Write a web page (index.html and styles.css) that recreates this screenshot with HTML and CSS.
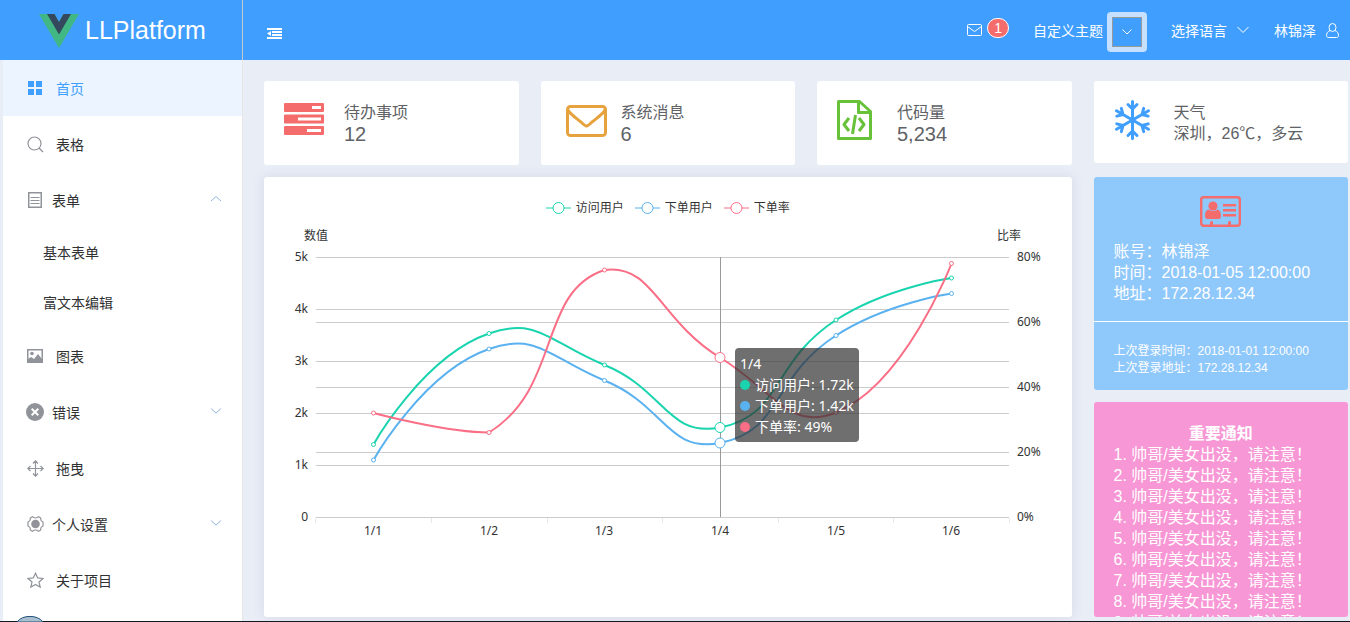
FILE: index.html
```html
<!DOCTYPE html>
<html lang="zh-CN">
<head>
<meta charset="utf-8">
<title>LLPlatform</title>
<link rel="stylesheet" href="styles.css">
</head>
<body>
<div class="app">
  <header class="header">
    <a class="brand" href="#">
      <svg class="brand-mark" width="40" height="34" viewBox="0 0 40 34" aria-hidden="true"><path d="M0 0h15.500l4.500 8 4.500-8H40L20 34z" fill="#41b883"/><path d="M8 0h7.500l4.500 8 4.500-8H32L20 20.500z" fill="#34495e"/></svg>
      <span>LLPlatform</span>
    </a>
    <button class="icon-button toggle" aria-label="收起菜单">
      <svg width="15" height="12" viewBox="0 0 15 12" fill="#fff"><path d="M0 0h15v2H0zM5 3h10v2H5zM5 6h10v2H5zM0 9h15v2H0zM4 3v5L0 5.500z"/></svg>
    </button>
    <nav class="tools">
      <a class="mail" href="#" aria-label="消息">
        <svg width="15" height="12" viewBox="0 0 15 12" fill="none" stroke="#fff"><rect x=".5" y=".5" width="14" height="11" rx="1"/><path d="M.5 2.500l7 5 7-5"/></svg>
        <span class="badge">1</span>
      </a>
      <div class="theme">
        <span>自定义主题</span>
        <button class="swatch" aria-label="选择颜色"><span class="swatch-color"><svg width="12" height="8" viewBox="0 0 12 8" fill="none" stroke="#fff"><path d="M1.500 1.500L6 6l4.500-4.500"/></svg></span></button>
      </div>
      <button class="text-button language">选择语言 <svg width="12" height="8" viewBox="0 0 12 8" fill="none" stroke="#fff"><path d="M.5 1l5.500 5.500L11.500 1"/></svg></button>
      <button class="text-button user">林锦泽 <svg width="13" height="15" viewBox="0 0 13 15" fill="none" stroke="#fff"><ellipse cx="6.500" cy="4.500" rx="3.500" ry="4"/><path d="M4 7.500C1.500 8.500.500 10.500.500 12.500c0 1.500 1 2 2 2h8c1 0 2-.500 2-2 0-2-1-4-3.500-5"/></svg></button>
    </nav>
  </header>

  <div class="body">
    <nav class="sidebar">
      <a class="item leaf active" href="#"><span class="glyph"><svg width="14" height="14" viewBox="0 0 14 14" fill="#409eff"><path d="M0 0h6v6H0zM8 0h6v6H8zM0 8h6v6H0zM8 8h6v6H8z"/></svg></span>首页</a>
      <a class="item leaf" href="#"><span class="glyph"><svg width="17" height="17" viewBox="0 0 17 17" fill="none" stroke="#909399" stroke-width="1.200"><circle cx="7.500" cy="7.500" r="6.500"/><path d="M12 12l4 4"/></svg></span>表格</a>
      <button class="item" aria-expanded="true"><span class="glyph"><svg width="14" height="16" viewBox="0 0 14 16" fill="none" stroke="#909399"><path d="M.750.750h12.500v14.500H.750z" stroke-width="1.500"/><path d="M2.500 5.500h9M2.500 8.500h9M2.500 11.500h9"/></svg></span>表单<svg class="arrow" width="12" height="8" viewBox="0 0 12 8"><path d="M1 6l5-4.500L11 6"/></svg></button>
      <a class="item sub" href="#">基本表单</a>
      <a class="item sub" href="#">富文本编辑</a>
      <a class="item leaf" href="#"><span class="glyph"><svg width="16" height="14" viewBox="0 0 16 14"><path d="M.750.750h14.500v12.500H.750z" fill="none" stroke="#909399" stroke-width="1.500"/><circle cx="5" cy="4.500" r="1.800" fill="#909399"/><path d="M1 13V10l3-2 3 2 4-5 4 5v3z" fill="#909399"/></svg></span>图表</a>
      <button class="item" aria-expanded="false"><span class="glyph"><svg width="18" height="18" viewBox="0 0 18 18"><circle cx="9" cy="9" r="9" fill="#909399"/><path d="M5.700 5.700l6.600 6.600M12.300 5.700l-6.600 6.600" stroke="#fff" stroke-width="2"/></svg></span>错误<svg class="arrow" width="12" height="8" viewBox="0 0 12 8"><path d="M1 1.500L6 6l5-4.500"/></svg></button>
      <a class="item leaf" href="#"><span class="glyph"><svg width="17" height="17" viewBox="0 0 17 17" fill="none" stroke="#909399" stroke-width="1.200"><path d="M8.500 1v15M1 8.500h15M6 3.500l2.500-2.700L11 3.500M6 13.500l2.500 2.700 2.500-2.700M3.500 6L.800 8.500 3.500 11M13.500 6l2.700 2.500-2.700 2.500"/></svg></span>拖曳</a>
      <button class="item" aria-expanded="false"><span class="glyph"><svg width="17" height="16" viewBox="0 0 17 16"><circle cx="8.500" cy="8" r="4.300" fill="#909399"/><path d="M5.500.700c1 1 2 1.300 3 1.300s2-.300 3-1.300l2.200 1.300c-.300 2 .400 3.300 2.300 4v4c-1.900.700-2.600 2-2.300 4l-2.200 1.300c-1-1-2-1.300-3-1.300s-2 .300-3 1.300L3.300 14c.300-2-.400-3.300-2.300-4V6c1.900-.700 2.600-2 2.300-4z" fill="none" stroke="#909399" stroke-width="1.200"/></svg></span>个人设置<svg class="arrow" width="12" height="8" viewBox="0 0 12 8"><path d="M1 1.500L6 6l5-4.500"/></svg></button>
      <a class="item leaf" href="#"><span class="glyph"><svg width="17" height="16" viewBox="0 0 17 16" fill="none" stroke="#909399" stroke-width="1.200"><path d="M8.500 1.200l2.200 4.700 5.300.600-4 3.500 1.200 5.100-4.700-2.700-4.700 2.700L5 10 1 6.500l5.300-.600z"/></svg></span>关于项目</a>
    </nav>

    <main class="main">
      <div class="left">
        <div class="stats">
          <section class="card stat">
            <svg class="stat-icon" width="40" height="40" viewBox="0 0 40 40"><path d="M1 3h38a1 1 0 0 1 1 1v7a1 1 0 0 1-1 1H1a1 1 0 0 1-1-1V4a1 1 0 0 1 1-1zM1 14.500h38a1 1 0 0 1 1 1v7a1 1 0 0 1-1 1H1a1 1 0 0 1-1-1v-7a1 1 0 0 1 1-1zM1 26h38a1 1 0 0 1 1 1v7a1 1 0 0 1-1 1H1a1 1 0 0 1-1-1v-7a1 1 0 0 1 1-1z" fill="#f56c6c"/><path d="M28 6h9v3h-9zM14 17.500h23v3H14zM23 29h14v3H23z" fill="#fff"/></svg>
            <div><h2 class="stat-title">待办事项</h2><p class="stat-value">12</p></div>
          </section>
          <section class="card stat">
            <svg class="stat-icon mail-icon" width="41" height="40" viewBox="0 0 41 40" fill="none" stroke="#e6a23c" stroke-width="3"><rect x="1.500" y="6.500" width="38" height="29" rx="3"/><path d="M2 10c2 4 8 8 13 12 3 3 4 4 5.500 4s2.500-1 5.500-4c5-4 11-8 13-12"/></svg>
            <div><h2 class="stat-title">系统消息</h2><p class="stat-value">6</p></div>
          </section>
          <section class="card stat">
            <svg class="stat-icon" width="40" height="40" viewBox="0 0 40 40" fill="none" stroke="#67c23a" stroke-width="3" stroke-linejoin="round"><path d="M1.500 1.500h21l11 10v27h-32zM21.500 1.500v11h12"/><path d="M12 18l-5 6.500 5 6.500M22 18l5 6.500-5 6.500M18.500 15l-3 19"/></svg>
            <div><h2 class="stat-title">代码量</h2><p class="stat-value">5,234</p></div>
          </section>
        </div>

        <section class="card chart">
          <ul class="legend">
            <li class="legend-item green"><svg width="25" height="14" viewBox="0 0 25 14"><path d="M0 7h25"/><circle cx="12.500" cy="7" r="5.500"/></svg>访问用户</li>
            <li class="legend-item blue"><svg width="25" height="14" viewBox="0 0 25 14"><path d="M0 7h25"/><circle cx="12.500" cy="7" r="5.500"/></svg>下单用户</li>
            <li class="legend-item pink"><svg width="25" height="14" viewBox="0 0 25 14"><path d="M0 7h25"/><circle cx="12.500" cy="7" r="5.500"/></svg>下单率</li>
          </ul>
          <svg class="plot" viewBox="0 0 807 400" preserveAspectRatio="xMinYMin meet" role="img" aria-label="访问用户、下单用户与下单率">
            <path class="grid-line" d="M52 40.500h693M52 92.500h693M52 105.500h693M52 144.500h693M52 170.500h693M52 196.500h693M52 235.500h693M52 248.500h693M52 300.500h693"/>
            <path class="tick" d="M51.500 301v5M167.500 301v5M283.500 301v5M398.500 301v5M514.500 301v5M629.500 301v5M745.500 301v5"/>
            <g class="axis" text-anchor="end">
              <text x="44" y="44">5k</text><text x="44" y="96">4k</text><text x="44" y="148">3k</text><text x="44" y="200">2k</text><text x="44" y="252">1k</text><text x="44" y="304">0</text>
            </g>
            <g class="axis">
              <text x="753" y="44">80%</text><text x="753" y="109">60%</text><text x="753" y="174">40%</text><text x="753" y="239">20%</text><text x="753" y="304">0%</text>
            </g>
            <g class="axis" text-anchor="middle">
              <text x="52" y="23">数值</text><text x="745" y="23">比率</text>
              <text x="109" y="318">1/1</text><text x="225" y="318">1/2</text><text x="340" y="318">1/3</text><text x="456" y="318">1/4</text><text x="572" y="318">1/5</text><text x="687" y="318">1/6</text>
            </g>
            <path class="pointer" d="M456.500 40v260"/>
            <g id="series"></g>
          </svg>
          <div class="tooltip">
            <div>1/4</div>
            <div><i class="dot green-dot"></i>访问用户: 1.72k</div>
            <div><i class="dot blue-dot"></i>下单用户: 1.42k</div>
            <div><i class="dot pink-dot"></i>下单率: 49%</div>
          </div>
        </section>
      </div>

      <aside class="right">
        <section class="card stat weather">
          <svg class="stat-icon" width="40" height="40" viewBox="0 0 40 40" fill="none" stroke="#409eff" stroke-width="3" stroke-linecap="round" stroke-linejoin="round"><g id="arm"><path d="M18.500 20V1.500M14 4.500l4.500 4.500L23 4.500"/></g><use href="#arm" transform="rotate(60 18.500 20)"/><use href="#arm" transform="rotate(120 18.500 20)"/><use href="#arm" transform="rotate(180 18.500 20)"/><use href="#arm" transform="rotate(240 18.500 20)"/><use href="#arm" transform="rotate(300 18.500 20)"/></svg>
          <div><h2 class="stat-title">天气</h2><p class="stat-text">深圳，26℃，多云</p></div>
        </section>
        <section class="account">
          <div class="account-main">
            <svg class="account-icon" width="41" height="31" viewBox="0 0 41 31"><rect x="1.200" y="1.200" width="38.600" height="28.600" rx="2.500" fill="none" stroke="#f56c6c" stroke-width="2.400"/><g fill="#f56c6c"><circle cx="13" cy="10" r="4.600"/><path d="M8.500 13.500c3 2 6 2 9 0 2.500.500 3.500 3 3.500 6.500 0 2-1 3-2.500 3h-11C6 23 5 22 5 20c0-3.500 1-6 3.500-6.500zM23 8h13v2.400H23zM23 13h13v2.400H23zM23 18h13v2.400H23zM10 29v-2.500c0-2 3-2 3 0V29zM28 29v-2.500c0-2 3-2 3 0V29z"/></g></svg>
            <p>账号：林锦泽</p>
            <p>时间：2018-01-05 12:00:00</p>
            <p>地址：172.28.12.34</p>
          </div>
          <div class="account-last">
            <p>上次登录时间：2018-01-01 12:00:00</p>
            <p>上次登录地址：172.28.12.34</p>
          </div>
        </section>
        <section class="notice">
          <h2 class="notice-title">重要通知</h2>
          <ul class="notice-list">
            <li>1. 帅哥/美女出没，请注意！</li>
            <li>2. 帅哥/美女出没，请注意！</li>
            <li>3. 帅哥/美女出没，请注意！</li>
            <li>4. 帅哥/美女出没，请注意！</li>
            <li>5. 帅哥/美女出没，请注意！</li>
            <li>6. 帅哥/美女出没，请注意！</li>
            <li>7. 帅哥/美女出没，请注意！</li>
            <li>8. 帅哥/美女出没，请注意！</li>
            <li>9. 帅哥/美女出没，请注意！</li>
          </ul>
        </section>
      </aside>
    </main>
  </div>
  <div class="taskbar"><svg class="orb" width="26" height="6" viewBox="0 0 26 6"><path d="M0 6C5-1.500 21-1.500 26 6z" fill="#a9bfd0" stroke="#1f4e79"/></svg></div>
</div>
<script src="chart.js"></script>
</body>
</html>
```

FILE: styles.css
```css
* {
  box-sizing: border-box;
}

body {
  margin: 0;
  background: #e9edf6;
  color: #303133;
  font-family: "Liberation Sans", "Noto Sans CJK SC", sans-serif;
  font-size: 14px;
}

h2,
p,
ul {
  margin: 0;
  padding: 0;
  font-weight: 400;
  list-style: none;
}

a {
  color: inherit;
  text-decoration: none;
}

button {
  border: 0;
  padding: 0;
  background: none;
  color: inherit;
  font: inherit;
  cursor: pointer;
}

svg {
  display: block;
  flex: none;
}

.app {
  display: grid;
  grid-template-rows: 60px minmax(0, 1fr) 1px;
  height: 100vh;
  overflow: hidden;
}

/* Header */
.header {
  display: flex;
  align-items: stretch;
  background: #409eff;
  color: #fff;
}

.brand {
  display: flex;
  align-items: center;
  gap: 6px;
  width: 243px;
  padding: 1px 0 0 39px;
  border-right: 1px solid #c5c9d2;
  font-size: 25px;
}

.toggle {
  padding: 7px 24px 0;
}

.tools {
  display: flex;
  align-items: center;
  gap: 24px;
  margin-left: auto;
  padding-right: 11px;
}

.mail {
  display: flex;
  align-items: center;
  gap: 5px;
}

.badge {
  margin-bottom: 5px;
  padding: 0 6px;
  border: 1px solid #fff;
  border-radius: 10px;
  background: #f56c6c;
  font-size: 14px;
  line-height: 18px;
}

.theme {
  display: flex;
  align-items: center;
  gap: 4px;
}

.swatch {
  width: 40px;
  height: 40px;
  margin-top: 4px;
  padding: 5px;
  border-radius: 4px;
  background: #c6e1ff;
}

.swatch-color {
  display: grid;
  place-items: center;
  height: 30px;
  border: 1px solid #999;
  background: #409eff;
}

.text-button {
  display: flex;
  align-items: center;
  gap: 10px;
}

.language {
  margin-right: 1px;
}

/* Sidebar */
.body {
  display: flex;
  min-height: 0;
}

.sidebar {
  flex: none;
  width: 240px;
  margin-left: 3px;
  border-right: 1px solid #e6e6e6;
  background: #fff;
  overflow: hidden;
}

.item {
  display: flex;
  align-items: center;
  gap: 5px;
  width: 100%;
  height: 56px;
  padding: 0 20px;
}

.leaf {
  gap: 9px;
}

.sub {
  height: 50px;
  padding-bottom: 2px;
  padding-left: 40px;
}

.active {
  background: #ecf5ff;
  color: #409eff;
}

.glyph {
  display: grid;
  place-items: center;
  width: 24px;
}

.arrow {
  margin-left: auto;
  margin-bottom: 2px;
  fill: none;
  stroke: #8fb4dc;
}

/* Dashboard */
.main {
  display: grid;
  flex: 1;
  grid-template-columns: repeat(4, minmax(0, 1fr));
  grid-template-rows: minmax(0, 1fr);
  gap: 22px;
  padding: 21px 2px 4px 21px;
}

.left,
.right {
  display: flex;
  flex-direction: column;
  min-height: 0;
}

.left {
  grid-column: span 3;
  gap: 12px;
}

.stats {
  display: grid;
  grid-template-columns: repeat(3, minmax(0, 1fr));
  gap: 22px;
}

.card {
  border-radius: 3px;
  background: #fff;
}

.stat {
  display: flex;
  gap: 20px;
  padding: 21px 20px 19px;
  color: #606266;
}

.stat-icon {
  margin-top: -2px;
}

.mail-icon {
  margin-left: 5px;
  margin-right: -6px;
}

.stat-title,
.stat-text {
  font-size: 16px;
  line-height: 21px;
}

.stat-value {
  font-size: 20px;
  line-height: 23px;
}

.chart {
  position: relative;
  display: flex;
  flex: 1;
  flex-direction: column;
  min-height: 0;
  padding-top: 22px;
  box-shadow: 0 0 12px rgba(90, 100, 140, 0.14);
  font-family: "Noto Sans", "Noto Sans CJK SC", sans-serif;
}

.legend {
  display: flex;
  justify-content: center;
  gap: 11px;
  font-size: 12px;
  line-height: 18px;
  color: #333;
}

.legend-item {
  display: flex;
  align-items: center;
  gap: 5px;
}

.legend-item svg {
  fill: #fff;
}

.green {
  stroke: #19d4ae;
}

.blue {
  stroke: #5ab1ef;
}

.pink {
  stroke: #fa6e86;
}

.plot {
  flex: 1;
  width: 100%;
  min-height: 0;
}

.axis {
  fill: #333;
  font-size: 12px;
}

.grid-line {
  fill: none;
  stroke: #ccc;
}

.tick {
  stroke: #e8e8e8;
}

.pointer {
  stroke: #999;
}

.line {
  fill: none;
  stroke-width: 2;
}

.marker {
  fill: #fff;
}

.tooltip {
  position: absolute;
  top: 171px;
  left: 471px;
  padding: 5px;
  border-radius: 4px;
  background: rgba(50, 50, 50, 0.7);
  color: #fff;
  font-size: 14px;
  line-height: 21px;
  white-space: nowrap;
}

.dot {
  display: inline-block;
  width: 10px;
  height: 10px;
  margin-right: 5px;
  border-radius: 50%;
}

.green-dot {
  background: #19d4ae;
}

.blue-dot {
  background: #5ab1ef;
}

.pink-dot {
  background: #fa6e86;
}

/* The TC face centres full-width punctuation in its cell */
.weather,
.account,
.notice {
  font-family: "Liberation Sans", "Noto Sans CJK TC", sans-serif;
}

.account,
.notice {
  border-radius: 3px;
  color: #fff;
  font-size: 16px;
  line-height: 21px;
}

.account {
  margin: 14px 0 12px;
  background: #8fc8fb;
}

.account-main {
  padding: 19px 20px 17px;
  border-bottom: 1px solid #fff;
}

.account-icon {
  margin: 0 auto 14px;
}

.account-last {
  padding: 21px 20px 13px;
  font-size: 12px;
  line-height: 17px;
}

.notice {
  flex: 1;
  min-height: 0;
  padding: 21px 20px 0;
  background: #f897d5;
  overflow: hidden;
}

.notice-title {
  font-size: 16px;
  font-weight: 700;
  line-height: 21px;
  text-align: center;
}

.taskbar {
  position: relative;
  background: #15191f;
}

.orb {
  position: absolute;
  bottom: 0;
  left: 17px;
}
```

FILE: chart.js
```js
const xs = [109.5, 225, 340.5, 456, 572, 687.5];
const series = [
  { name: "green", ys: [227.5, 116.5, 148, 210.5, 103, 61] },
  { name: "blue", ys: [243, 132, 163.5, 226, 118.5, 76.5] },
  { name: "pink", ys: [196, 215.5, 53, 140.5, 195.5, 46.5] }
];
const hovered = 3;

// Cubic path whose control points stay within the range of the data.
function smoothPath(points) {
  const low = Math.min(...points.map(p => p[1]));
  const high = Math.max(...points.map(p => p[1]));
  const clamp = y => Math.max(low, Math.min(high, y));
  const handles = points.map((p, i) => {
    const a = points[i - 1];
    const b = points[i + 1];
    if (!a || !b) return [p, p];
    const before = Math.hypot(p[0] - a[0], p[1] - a[1]);
    const after = Math.hypot(b[0] - p[0], b[1] - p[1]);
    const ratio = after / (before + after);
    const vx = (b[0] - a[0]) / 2;
    const vy = (b[1] - a[1]) / 2;
    return [
      [p[0] - vx * (1 - ratio), clamp(p[1] - vy * (1 - ratio))],
      [p[0] + vx * ratio, clamp(p[1] + vy * ratio)]
    ];
  });
  let d = "M" + points[0];
  for (let i = 1; i < points.length; i++) {
    d += "C" + handles[i - 1][1] + " " + handles[i][0] + " " + points[i];
  }
  return d;
}

document.getElementById("series").innerHTML = series.map(s => {
  const points = xs.map((x, i) => [x, s.ys[i]]);
  const markers = points.map((p, i) =>
    `<circle class="marker" cx="${p[0]}" cy="${p[1]}" r="${i === hovered ? 5 : 2}"/>`
  ).join("");
  return `<g class="${s.name}"><path class="line" d="${smoothPath(points)}"/>${markers}</g>`;
}).join("");
```
